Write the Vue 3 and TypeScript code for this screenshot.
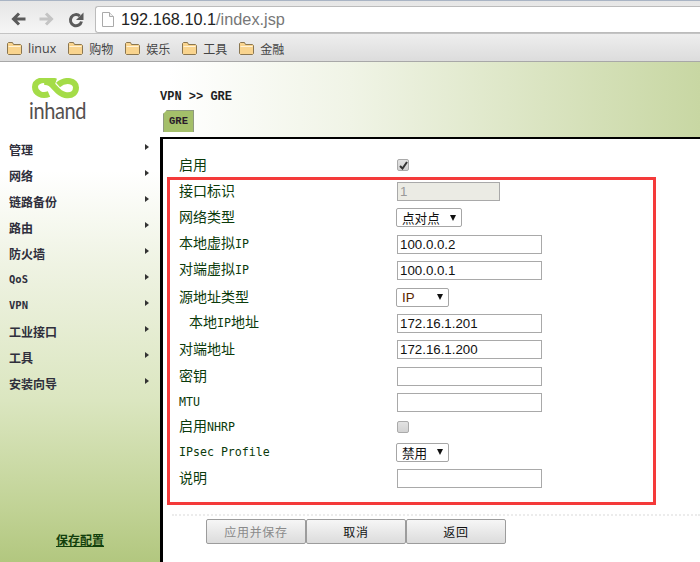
<script setup lang="ts">
interface NavItem { text: string; latin?: boolean }
const navItems: NavItem[] = [
  { text: '管理' }, { text: '网络' }, { text: '链路备份' }, { text: '路由' }, { text: '防火墙' },
  { text: 'QoS', latin: true }, { text: 'VPN', latin: true }, { text: '工业接口' }, { text: '工具' }, { text: '安装向导' },
]
const bookmarks = ['linux', '购物', '娱乐', '工具', '金融']
</script>

<template>
  <div class="app">
    <div class="toolbar">
      <div class="nav-icons">
        <svg width="16" height="14" viewBox="0 0 16 14"><path d="M15.500 7H3.500M9 1.500 3.500 7 9 12.500" fill="none" stroke="#5a5a5a" stroke-width="3" /></svg>
        <svg width="16" height="14" viewBox="0 0 16 14"><path d="M.5 7h12M7 1.500 12.500 7 7 12.500" fill="none" stroke="#c4c4c4" stroke-width="3" /></svg>
        <svg width="16" height="16" viewBox="0 0 16 16"><path d="M13.500 9.500A5.600 5.600 0 1 1 11.800 4" fill="none" stroke="#5a5a5a" stroke-width="3" /><path d="M15.500 .5v7.500H8z" fill="#5a5a5a" /></svg>
      </div>
      <div class="address">
        <svg width="12" height="15" viewBox="0 0 12 15"><path d="M.5.5h7l4 4v10H.5z" fill="#fff" stroke="#aaa" /><path d="M7.500.5v4h4" fill="#eee" stroke="#aaa" /></svg>
        <span class="url"><span class="host">192.168.10.1</span>/index.jsp</span>
      </div>
    </div>
    <div class="bookmarks">
      <div v-for="b in bookmarks" :key="b" class="bookmark">
        <svg width="15" height="13" viewBox="0 0 15 13"><path d="M.5 11.500v-10l1-1h4l1 2h7l1 1v8l-1 1h-12z" fill="#f9d48e" stroke="#8a7650" /><path d="M1.500 4.500h12" stroke="#fff3d8" /></svg>
        <span>{{ b }}</span>
      </div>
    </div>

    <header class="header">
      <div class="logo">
        <svg width="60" height="22" viewBox="0 0 60 22">
          <path d="M27 3.500C15 -.5 6 3 6 9c0 6 7 10 14 7" fill="none" stroke="#a4dc48" stroke-width="6" />
          <path d="M15 4c10-1 11 11 21 13 8 1.500 11-3 11-7.500C47 3 37 0 29 7" fill="none" stroke="#a4dc48" stroke-width="6" />
        </svg>
        <span class="logo-text">inhand</span>
      </div>
      <div class="crumb-area">
        <div class="crumb">VPN &gt;&gt; GRE</div>
        <div class="tab">GRE</div>
      </div>
    </header>

    <div class="body">
      <aside class="sidebar">
        <div v-for="n in navItems" :key="n.text" class="nav-item">
          <span :class="{ 'nav-latin': n.latin }">{{ n.text }}</span>
          <i class="nav-arrow"></i>
        </div>
        <a class="save" href="#">保存配置</a>
      </aside>

      <main class="panel">
        <div class="row first">
          <label class="label">启用</label>
          <span class="check checked">
            <svg width="9" height="9" viewBox="0 0 9 9"><path d="M1 5l2.500 2.500L8 1" fill="none" stroke="#333" stroke-width="2" /></svg>
          </span>
        </div>
        <div class="box">
          <div class="row"><label class="label">接口标识</label><input class="input short" value="1" disabled /></div>
          <div class="row">
            <label class="label">网络类型</label>
            <span class="select s66"><span>点对点</span><i class="caret"></i></span>
          </div>
          <div class="row"><label class="label">本地虚拟<span class="latin">IP</span></label><input class="input" value="100.0.0.2" /></div>
          <div class="row"><label class="label">对端虚拟<span class="latin">IP</span></label><input class="input" value="100.0.0.1" /></div>
          <div class="row">
            <label class="label">源地址类型</label>
            <span class="select s53"><span class="ip">IP</span><i class="caret"></i></span>
          </div>
          <div class="row"><label class="label indent">本地<span class="latin">IP</span>地址</label><input class="input" value="172.16.1.201" /></div>
          <div class="row"><label class="label">对端地址</label><input class="input" value="172.16.1.200" /></div>
          <div class="row"><label class="label">密钥</label><input class="input" /></div>
          <div class="row"><label class="label"><span class="latin">MTU</span></label><input class="input" /></div>
          <div class="row nhrp">
            <label class="label">启用<span class="latin">NHRP</span></label>
            <span class="check"></span>
          </div>
          <div class="row ipsec">
            <label class="label"><span class="latin">IPsec Profile</span></label>
            <span class="select s53"><span>禁用</span><i class="caret"></i></span>
          </div>
          <div class="row"><label class="label">说明</label><input class="input" /></div>
        </div>
        <div class="divider"></div>
        <div class="actions">
          <button class="btn" disabled>应用并保存</button>
          <button class="btn">取消</button>
          <button class="btn">返回</button>
        </div>
      </main>
    </div>
  </div>
</template>

<style scoped>
.app {
  width: 700px;
  height: 562px;
  overflow: hidden;
  display: flex;
  flex-direction: column;
  font-family: "Noto Sans CJK SC", "Liberation Sans", sans-serif;
  background: #fff;
}
.toolbar {
  height: 33px;
  box-sizing: border-box;
  border-top: 1px solid #a9b4c4;
  padding-top: 5px;
  display: flex;
  background: linear-gradient(#e6e6e6, #f6f6f6);
}
.nav-icons {
  width: 95px;
  box-sizing: border-box;
  padding: 6px 0 0 10px;
  display: flex;
  gap: 13px;
  align-items: flex-start;
}
.address {
  flex: 1;
  height: 27px;
  box-sizing: border-box;
  background: #fff;
  border: 1px solid #bcbcbc;
  border-right: 0;
  border-radius: 3px 0 0 3px;
  display: flex;
  align-items: center;
  padding-left: 6px;
  gap: 7px;
}
.url {
  font-family: "Liberation Sans", sans-serif;
  font-size: 16.300px;
  color: #777;
}
.host { color: #222; }
.bookmarks {
  height: 29px;
  box-sizing: border-box;
  background: linear-gradient(#eeeeee, #dcdcdc);
  border-top: 1px solid #c4c4c4;
  border-bottom: 1px solid #a8a8a8;
  display: flex;
  align-items: center;
  padding: 2px 0 0 7px;
  gap: 12px;
}
.bookmark {
  display: flex;
  align-items: center;
  gap: 6px;
  font-size: 12px;
  color: #444;
}
.bookmark:first-child span { font-family: "Open Sans", sans-serif; font-size: 12.500px; }

.header {
  height: 75px;
  display: flex;
  background: linear-gradient(to right, #fff 0, #fff 24%, #f0f4e6 50%, #c8d7a3 100%);
}
.logo {
  width: 160px;
  box-sizing: border-box;
  padding: 16px 0 0 29px;
  display: flex;
  flex-direction: column;
  align-items: flex-start;
}
.logo-text {
  font-family: Lato, sans-serif;
  font-weight: 400;
  font-size: 20px;
  line-height: 20px;
  color: #55504f;
  letter-spacing: -0.4px;
  transform: scaleY(1.15);
  transform-origin: top left;
  margin-top: -2px;
}
.crumb-area {
  padding-top: 26px;
  display: flex;
  flex-direction: column;
  align-items: flex-start;
}
.crumb {
  font-family: "Liberation Mono", monospace;
  font-weight: 700;
  font-size: 12px;
  line-height: 18px;
  color: #1f1f1f;
}
.tab {
  margin: 4px 0 0 3px;
  width: 31px;
  height: 22px;
  box-sizing: border-box;
  background: #a4bf6a;
  border: 1px solid #8f9a80;
  border-bottom: 0;
  clip-path: polygon(4px 0, 100% 0, 100% 100%, 0 100%, 0 4px);
  font-family: "Liberation Mono", monospace;
  font-weight: 700;
  font-size: 10.500px;
  line-height: 21px;
  text-align: center;
  color: #2a1a2a;
}
.body {
  flex: 1;
  display: flex;
  min-height: 0;
}
.sidebar {
  width: 160px;
  display: flex;
  flex-direction: column;
  background: linear-gradient(#fff 0, #fff 8%, #eff3e3 30%, #dbe6c0 62%, #c0d294 88%, #b2c77f 100%);
}
.nav-item {
  height: 26px;
  box-sizing: border-box;
  display: flex;
  align-items: center;
  justify-content: space-between;
  padding: 0 11px 2px 9px;
  font-size: 12px;
  font-weight: 700;
  color: #2f2f3c;
}
.nav-latin {
  font-family: "DejaVu Sans Mono", monospace;
  font-size: 10.500px;
}
.nav-arrow {
  width: 0;
  height: 0;
  border-left: 4px solid #333;
  border-top: 3.500px solid transparent;
  border-bottom: 3.500px solid transparent;
  margin-top: -4px;
}
.save {
  margin: auto 0 13px 56px;
  font-size: 12px;
  font-weight: 700;
  line-height: 18px;
  color: #123f0c;
}
.panel {
  flex: 1;
  box-sizing: border-box;
  border-top: 2px solid #000;
  border-left: 3px solid #000;
  padding-top: 17px;
  background: #fff;
}
.row {
  display: flex;
  align-items: center;
  height: 19px;
}
.first { padding-left: 16px; margin-bottom: 2px; }
.label {
  width: 218px;
  flex: none;
  box-sizing: content-box;
  font-size: 14px;
  line-height: 19px;
  padding-bottom: 2px;
  color: #0b3a0b;
  white-space: nowrap;
}
.latin {
  font-family: "DejaVu Sans Mono", monospace;
  font-size: 11.600px;
}
.indent { padding-left: 10px; width: 208px; }
.box {
  margin-left: 4px;
  width: 489px;
  height: 328px;
  box-sizing: border-box;
  border: 3px solid #f43a3a;
  padding: 2px 0 0 9px;
  display: flex;
  flex-direction: column;
  gap: 7.400px;
}
.nhrp { margin-top: -1.600px; }
.ipsec { margin-top: -1.400px; }
.input {
  width: 145px;
  height: 19px;
  box-sizing: border-box;
  border: 1px solid #a9a9a9;
  padding: 0 2px;
  margin: 0;
  font-family: "Liberation Sans", sans-serif;
  font-size: 13.300px;
  color: #111;
  background: #fff;
  outline: none;
}
.input.short {
  width: 103px;
  background: #ebebe4;
  color: #999;
}
.select {
  margin-left: -1px;
  height: 19px;
  box-sizing: border-box;
  border: 1px solid #a6a6a6;
  border-radius: 2px;
  background: #fff;
  display: flex;
  align-items: center;
  justify-content: space-between;
  padding: 0 5.500px 0 5px;
  font-size: 12.600px;
  color: #111;
}
.s66 { width: 66px; }
.s53 { width: 53px; }
.ip { font-family: "Liberation Sans", sans-serif; font-size: 13.300px; color: #5a2600; }
.caret {
  width: 0;
  height: 0;
  border-top: 6px solid #111;
  border-left: 3.500px solid transparent;
  border-right: 3.500px solid transparent;
}
.check {
  width: 12px;
  height: 12px;
  box-sizing: border-box;
  border: 1px solid #aaa;
  border-radius: 2px;
  background: linear-gradient(#e2e2e2, #d2d2d2);
  display: flex;
  align-items: center;
  justify-content: center;
  margin-top: -1px;
}
.divider {
  margin: 9px 0 0 9px;
  border-top: 2px dotted #ececec;
}
.actions {
  display: flex;
  margin: 3px 0 0 43px;
}
.btn {
  width: 100px;
  height: 25px;
  box-sizing: border-box;
  border: 1px solid #9c9c9c;
  border-radius: 2px;
  background: linear-gradient(#f6f6f6, #dcdcdc);
  font-family: "Noto Sans CJK SC", sans-serif;
  font-size: 12px;
  letter-spacing: 0.7px;
  color: #111;
  padding: 0;
}
.btn:disabled { color: #8a8a8a; }
</style>

<style>
html, body { margin: 0; padding: 0; }
</style>
